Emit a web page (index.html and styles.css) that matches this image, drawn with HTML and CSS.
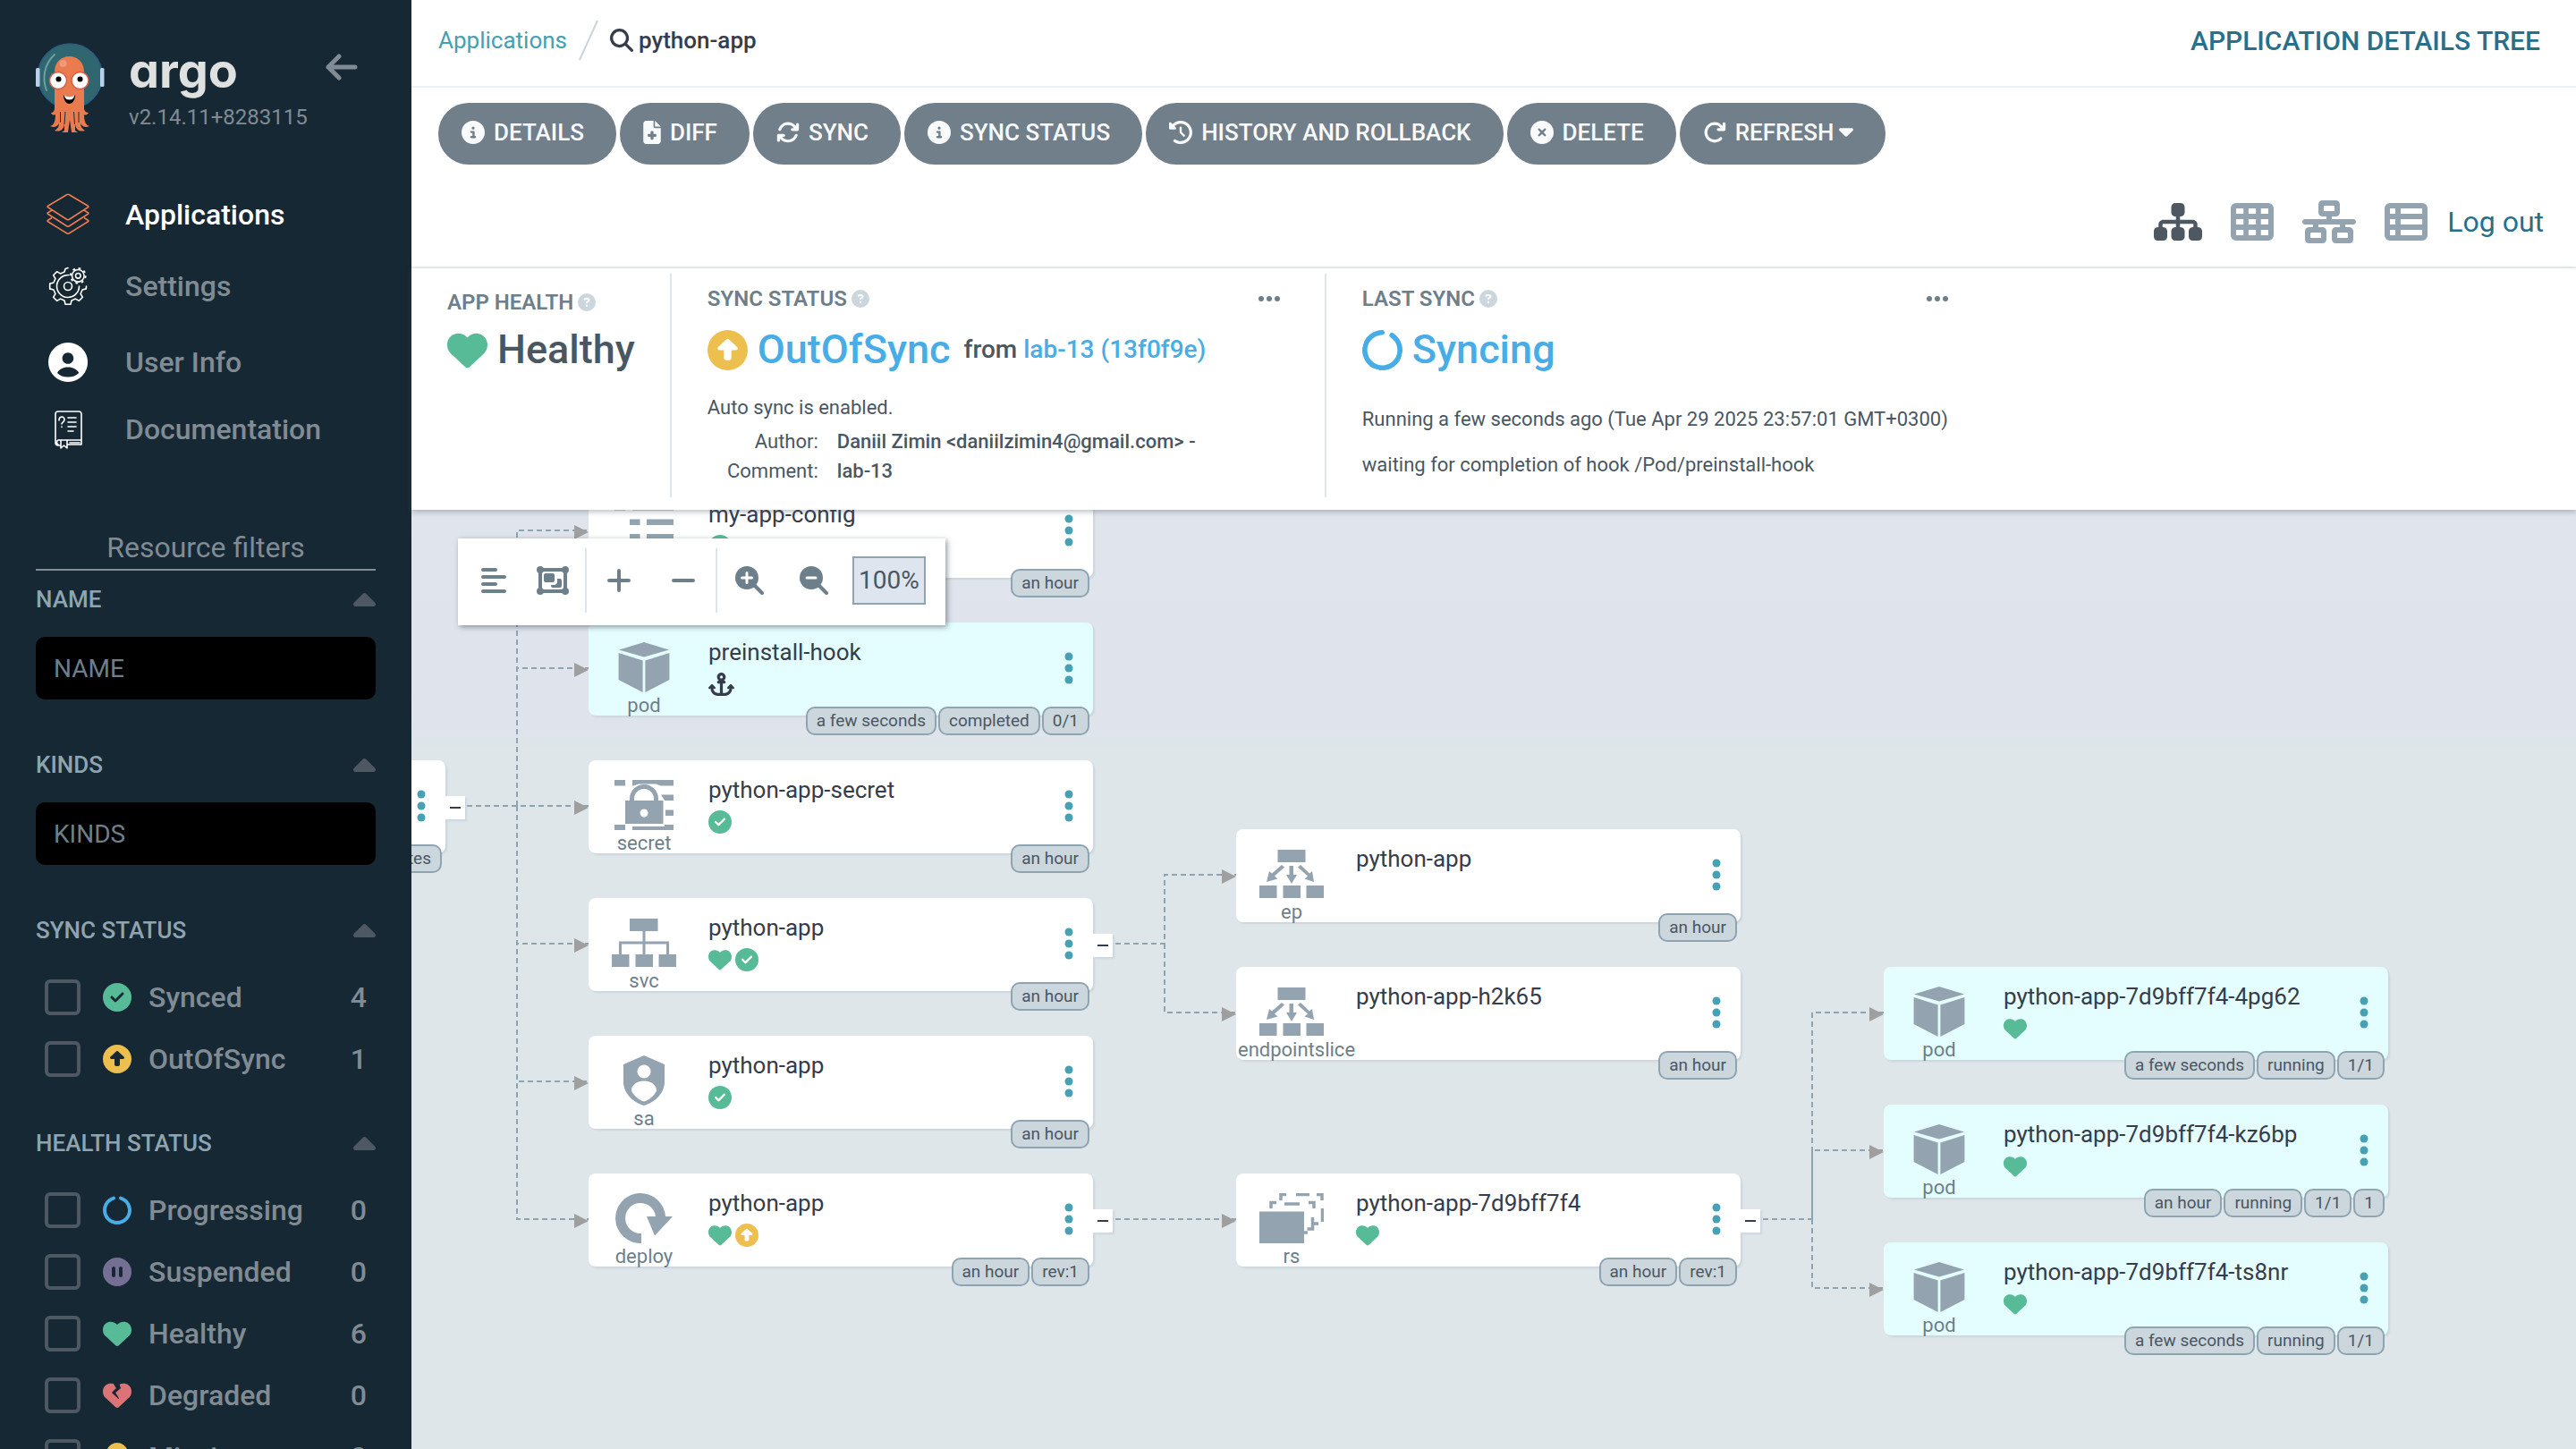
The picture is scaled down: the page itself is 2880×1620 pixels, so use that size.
FILE: index.html
```html
<!DOCTYPE html>
<html lang="en">
<head>
<meta charset="utf-8">
<meta name="viewport" content="width=device-width, initial-scale=1">
<title>python-app - Application Details Tree</title>
<link rel="stylesheet" href="styles.css">
</head>
<body>
<svg class="sprite" aria-hidden="true">
  <symbol id="i-heart" viewBox="0 0 512 512"><path d="M47.6 300.4L228.3 469.1c7.5 7 17.4 10.9 27.7 10.9s20.2-3.9 27.7-10.9L464.4 300.4c30.4-28.3 47.6-68 47.6-109.5v-5.8c0-69.9-50.5-129.5-119.4-141C347 36.5 300.6 51.4 268 84L256 96 244 84c-32.6-32.6-79-47.5-124.6-39.9C50.5 55.6 0 115.2 0 185.1v5.8c0 41.5 17.2 81.2 47.6 109.5z"/></symbol>
  <symbol id="i-heart-crack" viewBox="0 0 512 512"><path d="M119.4 44.1c23.3-3.9 46.8-1.9 68.6 5.3l49.8 77.5-75.4 75.4c-1.5 1.5-2.4 3.6-2.3 5.8s1 4.2 2.6 5.7l112 104c2.9 2.7 7.4 2.9 10.5 .3s3.8-7 1.7-10.4l-60.4-98.1 90.7-75.6c2.6-2.1 3.5-5.7 2.4-8.8L296.8 61.8c28.5-16.7 62.4-23.2 95.7-17.6C461.5 55.6 512 115.2 512 185.1v5.8c0 41.5-17.2 81.2-47.6 109.5L283.7 469.1c-7.5 7-17.4 10.9-27.7 10.9s-20.2-3.9-27.7-10.9L47.6 300.4C17.2 272.1 0 232.4 0 190.9v-5.8c0-69.9 50.5-129.5 119.4-141z"/></symbol>
  <symbol id="i-check" viewBox="0 0 512 512"><path d="M256 512A256 256 0 1 0 256 0a256 256 0 1 0 0 512zM369 209L241 337c-9.4 9.4-24.6 9.4-33.9 0l-64-64c-9.4-9.4-9.4-24.6 0-33.9s24.6-9.4 33.9 0l47 47L335 175c9.4-9.4 24.6-9.4 33.9 0s9.4 24.6 0 33.9z"/></symbol>
  <symbol id="i-up" viewBox="0 0 512 512"><path fill-rule="evenodd" d="M256 512A256 256 0 1 0 256 0a256 256 0 1 0 0 512zM135.1 217.4c-4.5 4.2-7.1 10.1-7.1 16.3c0 12.3 10 22.3 22.3 22.3H208v96c0 17.7 14.3 32 32 32h32c17.7 0 32-14.3 32-32V256h57.7c12.3 0 22.3-10 22.3-22.3c0-6.2-2.6-12.1-7.1-16.3L269.8 117.5c-3.8-3.5-8.7-5.5-13.8-5.5s-10.1 2-13.8 5.5L135.1 217.4z"/></symbol>
  <symbol id="i-notch" viewBox="0 0 512 512"><path d="M222.7 32.1c5 16.9-4.6 34.8-21.5 39.8C121.8 95.6 64 169.1 64 256c0 106 86 192 192 192s192-86 192-192c0-86.9-57.8-160.4-137.1-184.1c-16.9-5-26.6-22.9-21.5-39.8s22.9-26.6 39.8-21.5C434.9 42.1 512 140 512 256c0 141.4-114.6 256-256 256S0 397.4 0 256C0 140 77.1 42.1 182.9 10.6c16.9-5 34.8 4.6 39.8 21.5z"/></symbol>
  <symbol id="i-pause" viewBox="0 0 512 512"><path fill-rule="evenodd" d="M256 512A256 256 0 1 0 256 0a256 256 0 1 0 0 512zM224 192V320a32 32 0 0 1-64 0V192a32 32 0 0 1 64 0zm128 0V320a32 32 0 0 1-64 0V192a32 32 0 0 1 64 0z"/></symbol>
  <symbol id="i-ghost" viewBox="-64 0 512 512"><path d="M192 0C86 0 0 86 0 192v288c0 20 20 26 34 16l46-36 50 46c8 8 20 8 28 0l34-40 34 40c8 8 20 8 28 0l50-46 46 36c14 10 34 4 34-16V192C384 86 298 0 192 0zM128 160a32 32 0 1 1 0 64 32 32 0 0 1 0-64zm128 0a32 32 0 1 1 0 64 32 32 0 0 1 0-64z"/></symbol>
  <symbol id="i-info" viewBox="0 0 512 512"><path d="M256 512A256 256 0 1 0 256 0a256 256 0 1 0 0 512zM216 336h24V272H216c-13.3 0-24-10.7-24-24s10.7-24 24-24h48c13.3 0 24 10.7 24 24v88h8c13.3 0 24 10.7 24 24s-10.7 24-24 24H216c-13.3 0-24-10.7-24-24s10.7-24 24-24zm40-208a32 32 0 1 1 0 64 32 32 0 1 1 0-64z"/></symbol>
  <symbol id="i-question" viewBox="0 0 512 512"><path fill-rule="evenodd" d="M256 512A256 256 0 1 0 256 0a256 256 0 1 0 0 512zM169.8 165.3c7.9-22.3 29.1-37.3 52.8-37.3h58.3c34.9 0 63.1 28.3 63.1 63.1c0 22.6-12.1 43.5-31.7 54.8L280 264.4c-.2 13-10.9 23.6-24 23.6c-13.3 0-24-10.7-24-24V250.5c0-8.6 4.6-16.5 12.1-20.8l44.3-25.4c4.7-2.7 7.6-7.7 7.6-13.1c0-8.4-6.8-15.1-15.1-15.1H222.6c-3.4 0-6.4 2.1-7.5 5.3l-.4 1.2c-4.4 12.5-18.2 19-30.6 14.6s-19-18.2-14.6-30.6l.4-1.2zM224 352a32 32 0 1 1 64 0 32 32 0 1 1 -64 0z"/></symbol>
  <symbol id="i-caret-up" viewBox="0 128 320 192"><path d="M182.6 137.4c-12.5-12.5-32.8-12.5-45.3 0l-128 128c-9.2 9.2-11.9 22.9-6.9 34.9s16.6 19.8 29.6 19.8H288c12.9 0 24.6-7.8 29.6-19.8s2.2-25.7-6.9-34.9l-128-128z"/></symbol>
  <symbol id="i-minus" viewBox="0 0 26 26"><path d="M2 13h22" fill="none" stroke="currentColor" stroke-width="4" stroke-linecap="round"/></symbol>
  <symbol id="i-kebab" viewBox="0 0 10 36"><circle cx="5" cy="5" r="4.5"/><circle cx="5" cy="18" r="4.5"/><circle cx="5" cy="31" r="4.5"/></symbol>
  <symbol id="i-dots" viewBox="0 0 24 6"><circle cx="3" cy="3" r="3"/><circle cx="12" cy="3" r="3"/><circle cx="21" cy="3" r="3"/></symbol>
  <symbol id="k-pod" viewBox="0 0 72 56"><path d="M36 0l28 8.500-28 8L8 8.500zM7.600 12l27 8.500V56l-27-14zM64.400 12l-27 8.500V56l27-14z"/></symbol>
  <symbol id="k-ep" viewBox="0 0 72 56"><path d="M20.500 1h31v14h-31zM0 41h19.500v14H0zM26.500 41H46v14H26.500zM52.500 41H72v14H52.500zM33.500 19h4.500v10h4l-6 10-6-10h3.500zM25 18l3 2.500-11 10 3.500 3L8 37l3-12 3 2.500zM46 18l-3 2.500 11 10-3.500 3L61 37l-2-12-3 2.500z"/></symbol>
  <symbol id="k-svc" viewBox="0 0 72 56"><path d="M20 1h31.500v14H37.500v11.500H64V41h-3V29.500H37.500V41H46v14H26.500V41h8V29.500H11V41h8.500v14H0V41h8V26.500h26.500V15H20zM52.500 41H72v14H52.500z"/></symbol>
  <symbol id="k-cm" viewBox="0 0 72 56"><path d="M3 0h12v6.500H3zM23 0h46v6.500H23zM20 16.500h11.500V23H20zM39 16.500h30V23H39zM20 33h11.500v6.500H20zM39 33h30v6.500H39zM3 49.500h12V56H3zM23 49.500h46V56H23z"/></symbol>
  <symbol id="k-secret" viewBox="0 0 72 56"><path d="M3 0h12v6.500H3zM23 0h46v6.500H55l-6-2H30l-6 2h-1zM55 16.500h14V23H59zM60 33.500h9V40h-9zM3 50h12v6H3zM23 52h36v-2h10v6H23z"/><path fill-rule="evenodd" d="M15 23h42.500v26H15zM36 32.500a4.500 4.500 0 1 0 .1 0z"/><path d="M22.500 23v-2a13.500 13.500 0 0 1 27 0v2" fill="none" stroke="currentColor" stroke-width="5"/></symbol>
  <symbol id="k-sa" viewBox="0 0 72 56"><path fill-rule="evenodd" d="M36 0l23 10v19c0 13-10 23-23 27C23 52 13 42 13 29V10zM36 10.500a7.500 7.500 0 1 0 .1 0zM36 28.500c-9 0-14 5-14 11 3 6 8 10 14 12 6-2 11-6 14-12 0-6-5-11-14-11z"/></symbol>
  <symbol id="k-deploy" viewBox="0 0 72 56"><path d="M33 56A28 28 0 1 1 60 26h8L48 47.500 39 26h10A17 17 0 1 0 33 45z"/></symbol>
  <symbol id="k-rs" viewBox="0 0 72 56"><path d="M0 20.500h50V56H0z"/><path d="M13 17v-6.500h6M28 12h17M55 10.500h6V17M59.500 27v13h-6M24 8V1.500h6M41 1.500h15M64 1.500h6V8M70.500 17v15M66 34h-7M54 44h-4" fill="none" stroke="currentColor" stroke-width="3.500"/></symbol>
</svg>

<div class="app">
  <aside class="sidebar">
    <header class="brand">
      <svg class="brand__mascot" viewBox="0 0 76 100" aria-hidden="true">
        <circle cx="38.300" cy="37" r="36" fill="#2f6670" stroke="#2c5c82" stroke-width="1.500"/>
        <path d="M21 13C9 24 7 40 12 53" fill="none" stroke="#6f9fa0" stroke-width="2" stroke-linecap="round"/>
        <rect x="0" y="28" width="4.500" height="21" rx="1.500" fill="#b8d1ea"/><rect x="72" y="28" width="4.500" height="21" rx="1.500" fill="#b8d1ea"/>
        <path d="M21 74V32c0-10 7-17 16.500-17S54 22 54 32v42c1 3 3 4 5 4-2 3-4 3-5 2 0 8 2 12 6 13-4 2-8 1-10-3 0 4 2 6 5 8-6 2-10-1-11-7v7l3 2h-7l-2-14-2 14h-7l3-2v-7c-1 6-5 9-11 7 3-2 5-4 5-8-2 4-6 5-10 3 4-1 6-5 6-13-1 1-4 1-5-2 2 0 3-1 4-4z" fill="#e97b4f"/>
        <path d="M27.500 77v12M33 77l-1 14M42.500 77l1 14M48 77v12" fill="none" stroke="#16303a" stroke-width="1"/>
        <circle cx="30.500" cy="23" r="4" fill="#f09a7b"/>
        <circle cx="25" cy="42" r="9.500" fill="#fff" stroke="#d85f45" stroke-width="1.500"/><circle cx="49.500" cy="42" r="9.500" fill="#fff" stroke="#d85f45" stroke-width="1.500"/>
        <circle cx="25.500" cy="40.500" r="3" fill="#000"/><circle cx="49.500" cy="40.500" r="3" fill="#000"/>
        <path d="M31 58c4 3 9 3 13 0 0 6-3 10-6.500 10S31 64 31 58z" fill="#000"/><path d="M31.500 58c4 3 8 3 12 0l-1.500 4c-3 2-6 2-9 0z" fill="#fff"/>
      </svg>
      <div class="brand__text">
        <span class="brand__name">argo</span>
        <span class="brand__version">v2.14.11+8283115</span>
      </div>
      <button class="brand__collapse" type="button" aria-label="Collapse sidebar">
        <svg width="36" height="30" viewBox="0 0 36 30" fill="none" stroke="currentColor" stroke-width="5" stroke-linecap="round" stroke-linejoin="round"><path d="M33 15H3M15 3L3 15l12 12"/></svg>
      </button>
    </header>

    <nav class="nav">
      <a class="nav__item nav__item--active" href="#applications">
        <svg class="nav__icon" viewBox="0 0 48 48" fill="none" stroke="#f07c4e" stroke-width="1.500" stroke-linejoin="round"><path d="M23 1.500q1-.7 2 0l21 12.500q2 1 0 2L25 29.500q-1 .7-2 0L2 16q-2-1 0-2zM6 19l-4 2.500q-2 1 0 2L23 37q1 .7 2 0L46 23.500q2-1 0-2L42 19M6 27.500L2 30q-2 1 0 2l21 13q1 .7 2 0l21-13q2-1 0-2l-4-2.500"/></svg>
        Applications</a>
      <a class="nav__item" href="#settings">
        <svg class="nav__icon" viewBox="-3 -3 48 48" fill="none" stroke="#fff" stroke-width="1.600" stroke-linejoin="round" stroke-linecap="round"><path d="M41.500 21l-.2 2.900L37 25l-1.900 4.500 2.300 3.800-4.100 4.100-3.800-2.300L25 37l-1.100 4.300h-5.800L17 37l-4.500-1.900-3.800 2.300-4.100-4.100 2.300-3.800L5 25 .7 23.900v-5.800L5 17l1.900-4.500-2.300-3.800 4.100-4.100 3.800 2.300L17 5 18.100 1.500 21 .5"/><path d="M22 8.500A12.500 12.500 0 1 0 33.500 21"/><circle cx="21" cy="21" r="4.500"/><circle cx="32.300" cy="9.300" r="2.800"/><circle cx="32.300" cy="9.300" r="6.800"/><circle cx="32.300" cy="9.300" r="8.400" stroke-width="1.800" stroke-dasharray="2.800 3.800" stroke-linecap="butt"/></svg>
        Settings</a>
      <a class="nav__item" href="#user-info">
        <svg class="nav__icon" viewBox="-2 -2 48 48"><path fill="#fff" fill-rule="evenodd" d="M22 0a22 22 0 1 0 .1 0zM22 11.200a6.300 6.300 0 1 1-.1 0zM10 34C12 29 18 27.500 22 27.500S32 29 34.300 34C31 37 27 38.500 22 38.500S13 37 10 34z"/></svg>
        User Info</a>
      <a class="nav__item" href="#documentation">
        <svg class="nav__icon" viewBox="-9 -3 48 48" fill="none" stroke="#fff" stroke-width="1.600" stroke-linejoin="round" stroke-linecap="round"><path d="M7 39H4a3 3 0 0 1-3-3V4a3 3 0 0 1 3-3h23a3 3 0 0 1 3 3v34H15M4 33h26M4 33c-2 1-2 4 0 5M7 33v9l3.500-3 3.500 3v-9M17 36h11"/><path d="M15 8h9M15 13h9M15 18h9M15 23h6M5 11c0-5 6-5 6-1 0 3-3 3-3 5M8 18v.5"/></svg>
        Documentation</a>
    </nav>

    <section class="filters">
      <h2 class="filters__title">Resource filters</h2>
      <div class="filter">
        <label class="filter__head" for="f-name">NAME <svg class="caret"><use href="#i-caret-up"/></svg></label>
        <input class="filter__input" id="f-name" type="text" placeholder="NAME">
      </div>
      <div class="filter">
        <label class="filter__head" for="f-kinds">KINDS <svg class="caret"><use href="#i-caret-up"/></svg></label>
        <input class="filter__input" id="f-kinds" type="text" placeholder="KINDS">
      </div>
      <div class="filter filter--list">
        <div class="filter__head">SYNC STATUS <svg class="caret"><use href="#i-caret-up"/></svg></div>
        <label class="option"><input type="checkbox"><svg class="option__icon green"><use href="#i-check"/></svg><span class="option__name">Synced</span><span>4</span></label>
        <label class="option"><input type="checkbox"><svg class="option__icon yellow"><use href="#i-up"/></svg><span class="option__name">OutOfSync</span><span>1</span></label>
      </div>
      <div class="filter filter--list">
        <div class="filter__head">HEALTH STATUS <svg class="caret"><use href="#i-caret-up"/></svg></div>
        <label class="option"><input type="checkbox"><svg class="option__icon blue"><use href="#i-notch"/></svg><span class="option__name">Progressing</span><span>0</span></label>
        <label class="option"><input type="checkbox"><svg class="option__icon purple"><use href="#i-pause"/></svg><span class="option__name">Suspended</span><span>0</span></label>
        <label class="option"><input type="checkbox"><svg class="option__icon green"><use href="#i-heart"/></svg><span class="option__name">Healthy</span><span>6</span></label>
        <label class="option"><input type="checkbox"><svg class="option__icon red"><use href="#i-heart-crack"/></svg><span class="option__name">Degraded</span><span>0</span></label>
        <label class="option"><input type="checkbox"><svg class="option__icon yellow"><use href="#i-ghost"/></svg><span class="option__name">Missing</span><span>0</span></label>
      </div>
    </section>
  </aside>

  <main class="main">
    <header class="topbar">
      <nav class="crumbs">
        <a href="#applications">Applications</a>
        <svg width="22" height="46" viewBox="0 0 22 46" fill="none" stroke="#ccd3da" stroke-width="2"><path d="M21 1L1 45"/></svg>
        <span class="crumbs__current"><svg width="26" height="26" viewBox="0 0 512 512"><path d="M416 208c0 45.900-14.900 88.300-40 122.700L502.600 457.400c12.500 12.500 12.500 32.800 0 45.300s-32.800 12.500-45.300 0L330.700 376c-34.400 25.200-76.800 40-122.700 40C93.100 416 0 322.900 0 208S93.100 0 208 0S416 93.100 416 208zM208 352a144 144 0 1 0 0-288 144 144 0 1 0 0 288z"/></svg>python-app</span>
      </nav>
      <h1 class="topbar__title">APPLICATION DETAILS TREE</h1>
    </header>

    <section class="toolbar">
      <div class="actions">
        <button class="action" type="button"><svg width="26" height="26"><use href="#i-info"/></svg>DETAILS</button>
        <button class="action" type="button"><svg width="20" height="26" viewBox="0 0 384 512"><path d="M64 0C28.700 0 0 28.700 0 64V448c0 35.300 28.700 64 64 64H320c35.300 0 64-28.700 64-64V160H256c-17.700 0-32-14.300-32-32V0H64zM256 0V128H384L256 0zM160 240c0-8.800 7.200-16 16-16h32c8.800 0 16 7.200 16 16v48h48c8.800 0 16 7.200 16 16v32c0 8.800-7.200 16-16 16H224v48c0 8.800-7.200 16-16 16H176c-8.800 0-16-7.200-16-16V352H112c-8.800 0-16-7.200-16-16V304c0-8.800 7.200-16 16-16h48V240z"/></svg>DIFF</button>
        <button class="action" type="button"><svg width="26" height="26" viewBox="0 0 512 512"><path d="M105.100 202.600c7.700-21.800 20.200-42.300 37.800-59.800c62.500-62.500 163.800-62.500 226.300 0L386.300 160H352c-17.700 0-32 14.300-32 32s14.300 32 32 32H463.900c17.700 0 32-14.300 32-32V80c0-17.700-14.300-32-32-32s-32 14.300-32 32v35.200L414.400 97.600c-87.500-87.500-229.300-87.500-316.800 0C73.200 122 55.600 150.700 44.800 181.400c-5.900 16.700 2.900 34.900 19.500 40.800s34.900-2.900 40.800-19.500zM39 289.300c-5 1.500-9.800 4.200-13.700 8.200c-4 4-6.700 8.800-8.100 14c-.3 1.200-.6 2.500-.8 3.800c-.3 1.700-.4 3.400-.4 5.100V432c0 17.700 14.300 32 32 32s32-14.300 32-32V396.900l17.600 17.500c87.500 87.400 229.300 87.400 316.700 0c24.400-24.400 42.100-53.100 52.900-83.700c5.900-16.700-2.900-34.900-19.500-40.800s-34.900 2.900-40.800 19.500c-7.700 21.800-20.200 42.300-37.800 59.800c-62.500 62.500-163.800 62.500-226.300 0l-.1-.1L125.600 352H160c17.700 0 32-14.300 32-32s-14.300-32-32-32H48.400c-1.600 0-3.200 .1-4.800 .3s-3.100 .5-4.600 1z"/></svg>SYNC</button>
        <button class="action" type="button"><svg width="26" height="26"><use href="#i-info"/></svg>SYNC STATUS</button>
        <button class="action" type="button"><svg width="26" height="26" viewBox="0 0 512 512"><path d="M75 75L41 41C25.900 25.900 0 36.600 0 57.900V168c0 13.300 10.700 24 24 24H134.100c21.400 0 32.100-25.900 17-41l-30.800-30.800C155 85.500 203 64 256 64c106 0 192 86 192 192s-86 192-192 192c-40.800 0-78.600-12.700-109.700-34.400c-14.500-10.100-34.400-6.600-44.600 7.900s-6.600 34.400 7.900 44.600C151.200 495 201.700 512 256 512c141.400 0 256-114.600 256-256S397.400 0 256 0C185.300 0 121.300 28.700 75 75zm181 53c-13.300 0-24 10.700-24 24V256c0 6.400 2.500 12.500 7 17l72 72c9.400 9.400 24.600 9.400 33.900 0s9.400-24.600 0-33.900l-65-65V152c0-13.300-10.700-24-24-24z"/></svg>HISTORY AND ROLLBACK</button>
        <button class="action" type="button"><svg width="26" height="26" viewBox="0 0 512 512"><path d="M256 512A256 256 0 1 0 256 0a256 256 0 1 0 0 512zM175 175c9.400-9.400 24.600-9.400 33.900 0l47 47 47-47c9.400-9.400 24.600-9.400 33.900 0s9.400 24.600 0 33.900l-47 47 47 47c9.400 9.400 9.400 24.600 0 33.900s-24.600 9.400-33.900 0l-47-47-47 47c-9.400 9.400-24.600 9.400-33.900 0s-9.400-24.600 0-33.900l47-47-47-47c-9.400-9.400-9.400-24.600 0-33.900z"/></svg>DELETE</button>
        <button class="action" type="button"><svg width="26" height="26" viewBox="0 0 512 512"><path d="M386.300 160H336c-17.700 0-32 14.300-32 32s14.300 32 32 32H464c17.700 0 32-14.300 32-32V64c0-17.700-14.300-32-32-32s-32 14.300-32 32v51.200L414.400 97.600c-87.500-87.500-229.300-87.500-316.800 0s-87.500 229.300 0 316.800s229.300 87.500 316.800 0c12.500-12.500 12.500-32.800 0-45.300s-32.800-12.500-45.300 0c-62.500 62.500-163.800 62.500-226.300 0s-62.500-163.800 0-226.300s163.800-62.500 226.300 0L386.300 160z"/></svg><span>REFRESH <svg width="16" height="10" viewBox="0 192 320 192"><path d="M137.400 374.600c12.500 12.500 32.800 12.500 45.300 0l128-128c9.200-9.200 11.900-22.900 6.900-34.900s-16.600-19.800-29.600-19.800L32 192c-12.900 0-24.600 7.800-29.600 19.800s-2.200 25.700 6.900 34.900l128 128z"/></svg></span></button>
      </div>
      <div class="views">
        <button class="view view--active" type="button" aria-label="Tree"><svg width="54" height="48" viewBox="0 0 576 512"><path d="M208 80c0-26.500 21.500-48 48-48h64c26.500 0 48 21.500 48 48v64c0 26.500-21.500 48-48 48h-8v40H464c30.900 0 56 25.100 56 56v32h8c26.500 0 48 21.500 48 48v64c0 26.500-21.500 48-48 48H464c-26.500 0-48-21.500-48-48V368c0-26.500 21.500-48 48-48h8V288c0-4.400-3.600-8-8-8H312v40h8c26.500 0 48 21.500 48 48v64c0 26.500-21.500 48-48 48H256c-26.500 0-48-21.500-48-48V368c0-26.500 21.500-48 48-48h8V280H112c-4.400 0-8 3.600-8 8v32h8c26.500 0 48 21.500 48 48v64c0 26.500-21.500 48-48 48H48c-26.500 0-48-21.500-48-48V368c0-26.500 21.500-48 48-48h8V288c0-30.900 25.100-56 56-56H264V192h-8c-26.500 0-48-21.500-48-48V80z"/></svg></button>
        <button class="view" type="button" aria-label="Pods"><svg width="48" height="48" viewBox="0 0 512 512"><path fill-rule="evenodd" d="M64 32h384a64 64 0 0 1 64 64v320a64 64 0 0 1-64 64H64a64 64 0 0 1-64-64V96a64 64 0 0 1 64-64zM64 96v64h88V96zM212 96v64h88V96zM360 96v64h88V96zM64 224v64h88v-64zM212 224v64h88v-64zM360 224v64h88v-64zM64 352v64h88v-64zM212 352v64h88v-64zM360 352v64h88v-64z"/></svg></button>
        <button class="view" type="button" aria-label="Network"><svg width="60" height="48" viewBox="0 0 640 512"><path d="M256 64H384v64H256V64zM240 0c-26.500 0-48 21.500-48 48v96c0 26.500 21.500 48 48 48h48v32H32c-17.700 0-32 14.300-32 32s14.300 32 32 32h96v32H80c-26.500 0-48 21.500-48 48v96c0 26.500 21.500 48 48 48H240c26.500 0 48-21.500 48-48V368c0-26.500-21.500-48-48-48H192V288H448v32H400c-26.500 0-48 21.500-48 48v96c0 26.500 21.500 48 48 48H560c26.500 0 48-21.500 48-48V368c0-26.500-21.500-48-48-48H512V288h96c17.700 0 32-14.300 32-32s-14.300-32-32-32H352V192h48c26.500 0 48-21.500 48-48V48c0-26.500-21.500-48-48-48H240zM96 448V384H224v64H96zm320-64H544v64H416V384z" fill-rule="evenodd"/></svg></button>
        <button class="view" type="button" aria-label="List"><svg width="48" height="48" viewBox="0 0 512 512"><path fill-rule="evenodd" d="M64 32h384a64 64 0 0 1 64 64v320a64 64 0 0 1-64 64H64a64 64 0 0 1-64-64V96a64 64 0 0 1 64-64zM64 96v64h64V96zM192 96v64h256V96zM64 224v64h64v-64zM192 224v64h256v-64zM64 352v64h64v-64zM192 352v64h256v-64z"/></svg></button>
        <a class="logout" href="#logout">Log out</a>
      </div>
    </section>

    <section class="status">
      <div class="status__col status__col--health">
        <h3 class="status__head">APP HEALTH <svg class="help"><use href="#i-question"/></svg></h3>
        <div class="status__value"><svg class="status__icon green"><use href="#i-heart"/></svg>Healthy</div>
      </div>
      <div class="status__col status__col--sync">
        <h3 class="status__head">SYNC STATUS <svg class="help"><use href="#i-question"/></svg><button class="more" type="button" aria-label="More"><svg width="24" height="6"><use href="#i-dots"/></svg></button></h3>
        <div class="status__value"><svg class="status__icon yellow"><use href="#i-up"/></svg><a href="#diff">OutOfSync</a><span class="status__from">from <a href="#revision">lab-13 (13f0f9e)</a></span></div>
        <p class="status__note">Auto sync is enabled.</p>
        <dl class="meta"><dt>Author:</dt><dd>Daniil Zimin &lt;daniilzimin4@gmail.com&gt; -</dd><dt>Comment:</dt><dd>lab-13</dd></dl>
      </div>
      <div class="status__col status__col--last">
        <h3 class="status__head">LAST SYNC <svg class="help"><use href="#i-question"/></svg><button class="more" type="button" aria-label="More"><svg width="24" height="6"><use href="#i-dots"/></svg></button></h3>
        <div class="status__value"><svg class="status__icon status__icon--spin blue"><use href="#i-notch"/></svg><a href="#operation">Syncing</a></div>
        <p class="status__op">Running a few seconds ago (Tue Apr 29 2025 23:57:01 GMT+0300)<br>waiting for completion of hook /Pod/preinstall-hook</p>
      </div>
    </section>

    <section class="canvas">
      <svg class="edges" aria-hidden="true">
        <g class="edges__lines">
          <path d="M62 331h136M118 331V23h80M118 331V177h80M118 331v154h80M118 331v308h80M118 331v462h80"/>
          <path d="M787 485h55V408h80M842 485v77h80M787 793h135"/>
          <path d="M1511 793h55V562h80M1566 793v-77h80M1566 793v77h80"/>
        </g>
        <g class="edges__heads">
          <path d="M182 17l16 8-16 8zM182 171l16 8-16 8zM182 325l16 8-16 8zM182 479l16 8-16 8zM182 633l16 8-16 8zM182 787l16 8-16 8z"/>
          <path d="M906 402l16 8-16 8zM906 556l16 8-16 8zM906 787l16 8-16 8zM1630 556l16 8-16 8zM1630 710l16 8-16 8zM1630 864l16 8-16 8z"/>
        </g>
      </svg>

      <article class="node" style="--x:-526px;--y:280px">
        <div class="node__body"></div>
        <button class="node__menu" type="button" aria-label="Menu"><svg width="10" height="36"><use href="#i-kebab"/></svg></button>
        <div class="node__tags"><span>2 minutes</span></div>
        <button class="node__toggle" type="button" aria-label="Collapse"></button>
      </article>
      <article class="node" style="--x:198px;--y:-28px">
        <div class="node__kind"><svg><use href="#k-cm"/></svg>cm</div>
        <div class="node__body"><div>my-app-config</div><div class="node__state"><svg class="green"><use href="#i-check"/></svg></div></div>
        <button class="node__menu" type="button" aria-label="Menu"><svg width="10" height="36"><use href="#i-kebab"/></svg></button>
        <div class="node__tags"><span>an hour</span></div>
      </article>
      <article class="node node--pod" style="--x:198px;--y:126px">
        <div class="node__kind"><svg><use href="#k-pod"/></svg>pod</div>
        <div class="node__body"><div>preinstall-hook</div><div class="node__state"><svg class="node__anchor" viewBox="0 0 576 512"><path d="M320 96a32 32 0 1 1 -64 0 32 32 0 1 1 64 0zm21.100 80C367 158.800 384 129.400 384 96c0-53-43-96-96-96s-96 43-96 96c0 33.400 17 62.800 42.900 80H224c-17.700 0-32 14.300-32 32s14.300 32 32 32h32V448H208c-53 0-96-43-96-96v-6.100l7 7c9.400 9.400 24.600 9.400 33.900 0s9.400-24.600 0-33.900L97 263c-9.400-9.400-24.600-9.400-33.900 0L7 319c-9.400 9.400-9.400 24.600 0 33.900s24.600 9.400 33.900 0l7-7V352c0 88.400 71.600 160 160 160h160c88.400 0 160-71.600 160-160v-6.100l7 7c9.400 9.400 24.600 9.400 33.900 0s9.400-24.600 0-33.900l-56-56c-9.400-9.400-24.600-9.400-33.900 0l-56 56c-9.400 9.400-9.400 24.600 0 33.900s24.600 9.400 33.900 0l7-7V352c0 53-43 96-96 96H320V240h32c17.700 0 32-14.300 32-32s-14.300-32-32-32H341.100z"/></svg></div></div>
        <button class="node__menu" type="button" aria-label="Menu"><svg width="10" height="36"><use href="#i-kebab"/></svg></button>
        <div class="node__tags"><span>a few seconds</span><span>completed</span><span>0/1</span></div>
      </article>
      <article class="node" style="--x:198px;--y:280px">
        <div class="node__kind"><svg><use href="#k-secret"/></svg>secret</div>
        <div class="node__body"><div>python-app-secret</div><div class="node__state"><svg class="green"><use href="#i-check"/></svg></div></div>
        <button class="node__menu" type="button" aria-label="Menu"><svg width="10" height="36"><use href="#i-kebab"/></svg></button>
        <div class="node__tags"><span>an hour</span></div>
      </article>
      <article class="node" style="--x:198px;--y:434px">
        <div class="node__kind"><svg><use href="#k-svc"/></svg>svc</div>
        <div class="node__body"><div>python-app</div><div class="node__state"><svg class="green"><use href="#i-heart"/></svg><svg class="green"><use href="#i-check"/></svg></div></div>
        <button class="node__menu" type="button" aria-label="Menu"><svg width="10" height="36"><use href="#i-kebab"/></svg></button>
        <div class="node__tags"><span>an hour</span></div>
        <button class="node__toggle" type="button" aria-label="Collapse"></button>
      </article>
      <article class="node" style="--x:198px;--y:588px">
        <div class="node__kind"><svg><use href="#k-sa"/></svg>sa</div>
        <div class="node__body"><div>python-app</div><div class="node__state"><svg class="green"><use href="#i-check"/></svg></div></div>
        <button class="node__menu" type="button" aria-label="Menu"><svg width="10" height="36"><use href="#i-kebab"/></svg></button>
        <div class="node__tags"><span>an hour</span></div>
      </article>
      <article class="node" style="--x:198px;--y:742px">
        <div class="node__kind"><svg><use href="#k-deploy"/></svg>deploy</div>
        <div class="node__body"><div>python-app</div><div class="node__state"><svg class="green"><use href="#i-heart"/></svg><svg class="yellow"><use href="#i-up"/></svg></div></div>
        <button class="node__menu" type="button" aria-label="Menu"><svg width="10" height="36"><use href="#i-kebab"/></svg></button>
        <div class="node__tags"><span>an hour</span><span>rev:1</span></div>
        <button class="node__toggle" type="button" aria-label="Collapse"></button>
      </article>
      <article class="node" style="--x:922px;--y:357px">
        <div class="node__kind"><svg><use href="#k-ep"/></svg>ep</div>
        <div class="node__body"><div>python-app</div></div>
        <button class="node__menu" type="button" aria-label="Menu"><svg width="10" height="36"><use href="#i-kebab"/></svg></button>
        <div class="node__tags"><span>an hour</span></div>
      </article>
      <article class="node" style="--x:922px;--y:511px">
        <div class="node__kind"><svg><use href="#k-ep"/></svg>endpointslice</div>
        <div class="node__body"><div>python-app-h2k65</div></div>
        <button class="node__menu" type="button" aria-label="Menu"><svg width="10" height="36"><use href="#i-kebab"/></svg></button>
        <div class="node__tags"><span>an hour</span></div>
      </article>
      <article class="node" style="--x:922px;--y:742px">
        <div class="node__kind"><svg><use href="#k-rs"/></svg>rs</div>
        <div class="node__body"><div>python-app-7d9bff7f4</div><div class="node__state"><svg class="green"><use href="#i-heart"/></svg></div></div>
        <button class="node__menu" type="button" aria-label="Menu"><svg width="10" height="36"><use href="#i-kebab"/></svg></button>
        <div class="node__tags"><span>an hour</span><span>rev:1</span></div>
        <button class="node__toggle" type="button" aria-label="Collapse"></button>
      </article>
      <article class="node node--pod" style="--x:1646px;--y:511px">
        <div class="node__kind"><svg><use href="#k-pod"/></svg>pod</div>
        <div class="node__body"><div>python-app-7d9bff7f4-4pg62</div><div class="node__state"><svg class="green"><use href="#i-heart"/></svg></div></div>
        <button class="node__menu" type="button" aria-label="Menu"><svg width="10" height="36"><use href="#i-kebab"/></svg></button>
        <div class="node__tags"><span>a few seconds</span><span>running</span><span>1/1</span></div>
      </article>
      <article class="node node--pod" style="--x:1646px;--y:665px">
        <div class="node__kind"><svg><use href="#k-pod"/></svg>pod</div>
        <div class="node__body"><div>python-app-7d9bff7f4-kz6bp</div><div class="node__state"><svg class="green"><use href="#i-heart"/></svg></div></div>
        <button class="node__menu" type="button" aria-label="Menu"><svg width="10" height="36"><use href="#i-kebab"/></svg></button>
        <div class="node__tags"><span>an hour</span><span>running</span><span>1/1</span><span>1</span></div>
      </article>
      <article class="node node--pod" style="--x:1646px;--y:819px">
        <div class="node__kind"><svg><use href="#k-pod"/></svg>pod</div>
        <div class="node__body"><div>python-app-7d9bff7f4-ts8nr</div><div class="node__state"><svg class="green"><use href="#i-heart"/></svg></div></div>
        <button class="node__menu" type="button" aria-label="Menu"><svg width="10" height="36"><use href="#i-kebab"/></svg></button>
        <div class="node__tags"><span>a few seconds</span><span>running</span><span>1/1</span></div>
      </article>

      <div class="zoombar">
        <div class="zoombar__group">
          <button type="button" aria-label="Compact"><svg width="28" height="28" viewBox="0 0 28 28" fill="none" stroke="currentColor" stroke-width="4" stroke-linecap="round"><path d="M2 2h14M2 10h24M2 18h14M2 26h24"/></svg></button>
          <button type="button" aria-label="Group nodes"><svg width="36" height="32" viewBox="0 0 36 32"><path d="M4 4h28v24H4z" fill="none" stroke="currentColor" stroke-width="4"/><circle cx="4" cy="4" r="4"/><circle cx="32" cy="4" r="4"/><circle cx="4" cy="28" r="4"/><circle cx="32" cy="28" r="4"/><path d="M10 8h8a2 2 0 0 1 2 2v6a2 2 0 0 1-2 2h-8a2 2 0 0 1-2-2v-6a2 2 0 0 1 2-2zM23 14h3a2 2 0 0 1 2 2v6a2 2 0 0 1-2 2h-8a2 2 0 0 1-2-2v-1h3a4 4 0 0 0 4-4z"/></svg></button>
        </div>
        <div class="zoombar__group zoombar__group--wide">
          <button type="button" aria-label="Expand all"><svg width="26" height="26" viewBox="0 0 26 26" fill="none" stroke="currentColor" stroke-width="4" stroke-linecap="round"><path d="M2 13h22M13 2v22"/></svg></button>
          <button type="button" aria-label="Collapse all"><svg width="26" height="26"><use href="#i-minus"/></svg></button>
        </div>
        <div class="zoombar__group zoombar__group--zoom">
          <button type="button" aria-label="Zoom in"><svg width="32" height="32" viewBox="0 0 32 32"><path d="M20 20l10 10" fill="none" stroke="currentColor" stroke-width="4" stroke-linecap="round"/><circle cx="13" cy="13" r="13"/><path d="M7.500 13h11M13 7.500v11" fill="none" stroke="#fff" stroke-width="3" stroke-linecap="round"/></svg></button>
          <button type="button" aria-label="Zoom out"><svg width="32" height="32" viewBox="0 0 32 32"><path d="M20 20l10 10" fill="none" stroke="currentColor" stroke-width="4" stroke-linecap="round"/><circle cx="13" cy="13" r="13"/><path d="M8 13h10" fill="none" stroke="#fff" stroke-width="3" stroke-linecap="round"/></svg></button>
          <output class="zoombar__level">100%</output>
        </div>
      </div>
    </section>
  </main>
</div>
</body>
</html>
```
FILE: styles.css
```css
*, *::before, *::after { box-sizing: border-box; }

body {
  margin: 0;
  font-family: Roboto, "Liberation Sans", sans-serif;
  font-size: 22px;
  color: #495763;
}
h1, h2, h3, p, dl, dd { margin: 0; }
a { color: inherit; text-decoration: none; }
button {
  padding: 0;
  border: 0;
  background: none;
  font: inherit;
  color: inherit;
  cursor: pointer;
}
svg { display: block; fill: currentColor; flex: none; }
svg[fill="none"] { fill: none; }
.sprite { position: absolute; width: 0; height: 0; }

.green { color: #57bb97; }
.yellow { color: #edbf4f; }
.blue { color: #48ade6; }
.purple { color: #766f94; }
.red { color: #dc7377; }

.app { display: flex; height: 100vh; overflow: hidden; }

/* Sidebar */
.sidebar {
  flex: 0 0 460px;
  padding: 48px 40px 0;
  overflow: hidden;
  background: #162833;
  color: #818b93;
}
.brand { display: flex; align-items: flex-start; height: 152px; }
.brand__mascot { width: 76px; height: 100px; margin-right: 28px; overflow: visible; }
.brand__text { display: flex; flex-direction: column; gap: 16px; padding-top: 9px; }
.brand__name {
  font: 700 54px/44px Inter, sans-serif;
  font-feature-settings: "cv11" 1;
  color: #dfe1e0;
}
.brand__version { font-size: 24px; line-height: 28px; white-space: nowrap; }
.brand__collapse { margin: 12px 20px 0 auto; }

.nav { display: grid; grid-template-rows: 80px 80px 90px 60px; }
.nav__item {
  display: flex;
  align-items: center;
  gap: 40px;
  padding-left: 12px;
  font-size: 32px;
  font-weight: 500;
}
.nav__item--active { color: #fff; }
.nav__icon { width: 48px; height: 48px; }

.filters { margin-top: 82px; }
.filters__title {
  padding-bottom: 4px;
  border-bottom: 2px solid #868e95;
  margin-bottom: 12px;
  font-size: 32px;
  font-weight: 400;
  line-height: 40px;
  text-align: center;
}
.filter { margin-bottom: 53px; }
.filter--list { margin-bottom: 40px; }
.filter__head {
  display: flex;
  justify-content: space-between;
  align-items: center;
  font-size: 26px;
  font-weight: 500;
  line-height: 40px;
  color: #8fa4b1;
}
.filter--list .filter__head { margin-bottom: 20px; }
.caret { width: 25px; height: 15px; color: #4d5863; }
.filter__input {
  width: 100%;
  height: 70px;
  margin-top: 22px;
  padding: 0 20px;
  border: 0;
  border-radius: 10px;
  background: #000;
  font: 28px Roboto, sans-serif;
  color: #fff;
}
.filter__input::placeholder { color: #6d7f8b; opacity: 1; }
.option {
  display: flex;
  align-items: center;
  height: 69px;
  padding: 0 10px;
  font-size: 32px;
  font-weight: 500;
}
.option input {
  appearance: none;
  width: 40px;
  height: 40px;
  margin: 0 25px 0 0;
  border: 4px solid #4d5863;
  border-radius: 6px;
}
.option__icon { width: 32px; height: 32px; margin-right: 19px; }
.option__name { flex: 1; }

/* Header */
.main { flex: 1; min-width: 0; display: flex; flex-direction: column; background: #fff; }
.topbar {
  display: flex;
  justify-content: space-between;
  align-items: center;
  height: 98px;
  padding: 0 40px 6px 30px;
  border-bottom: 2px solid #ecf1f5;
}
.crumbs { display: flex; align-items: center; gap: 13px; font-size: 26px; color: #44a0b3; }
.crumbs__current { display: flex; align-items: center; gap: 6px; font-weight: 500; color: #363c4a; }
.topbar__title { font-size: 30px; font-weight: 500; color: #28708a; }

.toolbar { padding: 17px 36px 26px 30px; border-bottom: 2px solid #ecf1f5; }
.actions { display: flex; gap: 4px; }
.action {
  display: flex;
  align-items: center;
  gap: 10px;
  height: 69px;
  padding: 0 36px 4px 26px;
  border-radius: 34px;
  background: #717f8a;
  font-size: 26px;
  font-weight: 500;
  color: #f8fafb;
  white-space: nowrap;
}
.action span { display: flex; align-items: center; gap: 6px; }
.views {
  display: flex;
  justify-content: flex-end;
  align-items: center;
  gap: 32px;
  height: 48px;
  margin-top: 40px;
  color: #93a3b0;
}
.view--active { color: #4d5863; }
.logout { margin-left: -10px; font-size: 32px; color: #28708a; }

.status {
  position: relative;
  z-index: 2;
  display: flex;
  padding: 6px 0 14px;
  background: #fff;
  box-shadow: 0 2px 6px rgba(73, 87, 99, .4);
}
.status__col { height: 250px; padding: 12px 40px 0; }
.status__col + .status__col { border-left: 2px solid #dee6eb; }
.status__col--health { padding-top: 16px; padding-right: 39px; }
.status__col--sync { flex: 0 0 732px; padding-right: 50px; }
.status__head {
  display: flex;
  align-items: center;
  gap: 5px;
  margin-bottom: 13px;
  font-size: 24px;
  font-weight: 600;
  line-height: 32px;
  color: #6d7f8b;
}
.help { width: 20px; height: 20px; color: #ccd6dd; }
.more { margin-left: auto; }
.status__value {
  display: flex;
  align-items: center;
  gap: 11px;
  font-size: 45px;
  font-weight: 500;
  line-height: 56px;
}
.status__col--health .status__value { line-height: 48px; }
.status__value a { color: #48ade6; }
.status__icon { width: 45px; height: 45px; }
.status__icon--spin { transform: rotate(16deg); }
.status__from { margin-left: 4px; font-size: 28px; }
.status__note { margin-top: 19px; line-height: 36px; }
.meta { display: grid; grid-template-columns: 124px 1fr; column-gap: 21px; margin-top: 3px; line-height: 33px; }
.meta dt { text-align: right; }
.meta dd { font-weight: 500; }
.status__op { margin-top: 24px; line-height: 51px; white-space: nowrap; }

/* Resource tree */
.canvas {
  position: relative;
  flex: 1;
  overflow: hidden;
  background: linear-gradient(#e0e4ec 0, #dfe4ec 240px, #dee6e9 270px);
}
.edges { position: absolute; inset: 0; width: 100%; height: 100%; }
.edges__lines { fill: none; stroke: #8fa4b1; stroke-width: 2; stroke-dasharray: 6 4; }
.edges__heads { fill: #a09f9f; }

.node {
  position: absolute;
  left: var(--x);
  top: var(--y);
  display: flex;
  width: 564px;
  height: 104px;
  border-radius: 8px;
  background: #fff;
  box-shadow: 2px 2px 2px #ccd6dd;
  color: #363c4a;
}
.node--pod { background: #e4fdff; }
.node__kind {
  width: 124px;
  padding: 22px 2px 0;
  line-height: 26px;
  text-align: center;
  color: #6d7f8b;
  white-space: nowrap;
}
.node__kind svg { width: 72px; height: 56px; margin: 0 auto 2px; color: #93a3b0; }
.node__body { flex: 1; padding: 18px 0 0 10px; font-size: 26px; line-height: 30px; white-space: nowrap; }
.node__state { display: flex; gap: 4px; margin-top: 8px; }
.node__state svg { width: 26px; height: 26px; }
.node__state .node__anchor { width: 29px; }
.node__menu { align-self: flex-start; margin: 33px 22px 0 0; color: #45a1b3; }
.node__tags { position: absolute; right: 4px; bottom: -22px; display: flex; gap: 2px; }
.node__tags span {
  height: 32px;
  padding: 0 10px;
  border: 2px solid #8fa4b1;
  border-radius: 10px;
  background: #ccd6dd;
  font-size: 19px;
  line-height: 28px;
  color: #495763;
  white-space: nowrap;
}
.node__toggle {
  position: absolute;
  left: 100%;
  top: 40px;
  display: grid;
  place-items: center;
  width: 22px;
  height: 26px;
  background: #fff;
  box-shadow: 2px 2px 2px #ccd6dd;
}
.node__toggle::before { content: ""; width: 12px; height: 2px; background: #363c4a; }

.zoombar {
  position: absolute;
  left: 52px;
  top: 32px;
  display: flex;
  align-items: center;
  height: 97px;
  padding: 0 22px 4px 26px;
  background: #fff;
  box-shadow: 2px 2px 6px rgba(73, 87, 99, .6);
  color: #6d7f8b;
}
.zoombar__group { display: flex; align-items: center; gap: 34px; height: 72px; }
.zoombar__group + .zoombar__group { border-left: 2px solid #dee6eb; }
.zoombar__group:first-child { padding-right: 18px; }
.zoombar__group--wide { gap: 46px; padding: 0 23px; }
.zoombar__group--zoom { gap: 40px; padding-left: 20px; }
.zoombar__level {
  height: 54px;
  margin-left: -13px;
  padding: 0 5px;
  border: 2px solid #8fa4b1;
  background: #dfe5ee;
  font-size: 28px;
  line-height: 50px;
  color: #495763;
}
```
